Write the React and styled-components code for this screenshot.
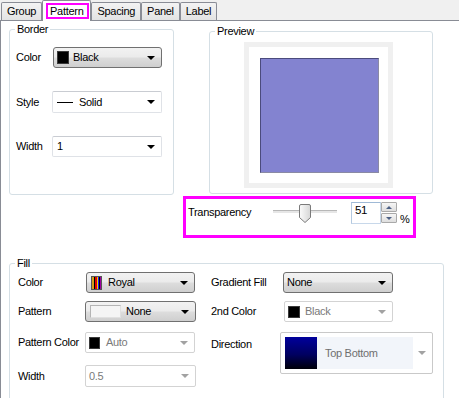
import React from 'react';
import styled, { createGlobalStyle } from 'styled-components';

const GlobalStyle = createGlobalStyle`
  html, body { margin: 0; padding: 0; background: #ffffff; }
  body {
    font-family: "Liberation Sans", Arial, sans-serif;
    font-size: 11px;
    letter-spacing: -0.3px;
    color: #000;
  }
  * { box-sizing: border-box; }
`;

const Window = styled.div`
  width: 459px;
  height: 398px;
  overflow: hidden;
  background: #f0f0f0;
  display: flex;
  flex-direction: column;
`;

const TabStrip = styled.div`
  display: flex;
  align-items: flex-end;
  height: 20px;
  padding-left: 1px;
  flex-shrink: 0;
`;

const Tab = styled.div`
  position: relative;
  z-index: ${p => (p.$active ? 2 : 1)};
  height: ${p => (p.$active ? '21px' : '18px')};
  margin-bottom: ${p => (p.$active ? '-1px' : '0')};
  padding: ${p => (p.$active ? '2px 1px 0 3px' : '0 5px')};
  display: flex;
  align-items: ${p => (p.$active ? 'flex-start' : 'center')};
  border: 1px solid #898c95;
  border-bottom: none;
  border-radius: 2px 2px 0 0;
  background: ${p => (p.$active ? '#ffffff' : 'linear-gradient(#f3f3f3, #e3e3e3)')};
  line-height: 13px;
`;

const Highlight = styled.span`
  border: 2px solid #ff00ff;
  line-height: 12px;
  padding: 0 4px 0 2px;
`;

const Page = styled.div`
  flex: 1;
  background: #ffffff;
  border-top: 1px solid #898c95;
  border-left: 1px solid #898c95;
  padding: 2px 0 0 8px;
`;

const TopRow = styled.div`
  display: flex;
  align-items: flex-start;
`;

const GroupBox = styled.fieldset`
  margin: ${p => p.$margin || '0'};
  min-width: 0;
  width: ${p => p.$w}px;
  height: ${p => p.$h}px;
  border: 1px solid #d5dfe5;
  border-radius: 3px;
  padding: 0;
`;

const GroupBody = styled.div`
  padding: ${p => p.$pad};
`;

const Legend = styled.legend`
  padding: 0 2px;
  margin-left: 5px;
  line-height: 13px;
`;

const FormStack = styled.div`
  display: flex;
  flex-direction: column;
  gap: 23px;
`;

const Row = styled.div`
  display: flex;
  align-items: ${p => (p.$top ? 'flex-start' : 'center')};
  margin-top: ${p => p.$mt || 0}px;
`;

const FieldLabel = styled.div`
  width: ${p => p.$w}px;
  line-height: 13px;
  margin-top: ${p => p.$mt || 0}px;
  flex-shrink: 0;
`;

const Combo = styled.div`
  display: flex;
  align-items: center;
  width: ${p => p.$w}px;
  height: ${p => p.$h || 21}px;
  padding-left: ${p => p.$pl || 3}px;
  line-height: 13px;
  ${p =>
    p.$variant === 'button'
      ? `
    border: 1px solid #707070;
    border-radius: 3px;
    background: linear-gradient(#f2f2f2 0%, #ebebeb 48%, #dddddd 52%, #cfcfcf 100%);
  `
      : p.$variant === 'edit'
      ? `
    border: 1px solid #dfe2e7;
    border-top-color: #c9ccd2;
    border-radius: 2px;
    background: #ffffff;
  `
      : `
    border: 1px solid #d3d3d3;
    border-radius: 2px;
    background: #ffffff;
    color: #7a7a7a;
  `}
`;

const Arrow = styled.span`
  margin-left: auto;
  margin-right: 6px;
  width: 0;
  height: 0;
  border-left: 4px solid transparent;
  border-right: 4px solid transparent;
  border-top: 4px solid ${p => (p.$disabled ? '#a2a2a2' : '#000000')};
`;

const Swatch = styled.span`
  width: ${p => p.$w || 12}px;
  height: ${p => p.$h || 13}px;
  margin-right: ${p => p.$mr || 4}px;
  background: ${p => p.$bg || '#000'};
  border: 1px solid #3a3a3a;
  flex-shrink: 0;
`;

const RoyalSwatch = styled.span`
  width: 11px;
  height: 14px;
  margin: 0 6px 0 1px;
  flex-shrink: 0;
  border: 1px solid #555;
  background: linear-gradient(
    to right,
    #d4a017 0 1.5px,
    #000 1.5px 3px,
    #e00000 3px 4.5px,
    #f2d000 4.5px 6px,
    #1a1aff 6px 7.5px,
    #000 7.5px 8px,
    #a000a0 8px 9px
  );
`;

const PatternPreview = styled.span`
  width: 31px;
  height: 13px;
  margin: 0 5px 0 1px;
  border: 1px solid #b4b4b4;
  border-right-color: #e0e0e0;
  border-bottom-color: #e0e0e0;
  background: #f4f4f4;
  flex-shrink: 0;
`;

const StyleLine = styled.span`
  width: 16px;
  height: 1px;
  background: #000;
  margin-right: 6px;
`;

const SideColumn = styled.div`
  display: flex;
  flex-direction: column;
  margin-left: 9px;
`;

const PreviewFrame = styled.div`
  width: 149px;
  height: 146px;
  border: 5px solid #f0f0f0;
  background: #ffffff;
  padding: 11px 10px 10px 11px;
`;

const PreviewFill = styled.div`
  width: 119px;
  height: 115px;
  background: #8383d0;
  border: 1px solid #8a8aa4;
  border-top-color: #4b4b7d;
  border-left-color: #4b4b7d;
`;

const TransparencyBox = styled.div`
  margin-top: 2px;
  width: 233px;
  height: 42px;
  border: 3px solid #ff00ff;
  display: flex;
  align-items: flex-start;
  padding: 3px 0 0 2px;
`;

const SliderWrap = styled.div`
  margin-top: 2px;
  width: 64px;
  height: 20px;
`;

const Spin = styled.div`
  display: flex;
  margin-left: 14px;
  height: 22px;
`;

const SpinEdit = styled.div`
  width: 30px;
  height: 22px;
  border: 1px solid #c8d8ea;
  border-top-color: #9fb9d6;
  border-left-color: #b4c9e0;
  padding: 1px 0 0 3px;
  line-height: 13px;
  font-size: 11.5px;
`;

const SpinButtons = styled.div`
  display: flex;
  flex-direction: column;
  width: 16px;
  gap: 1px;
`;

const SpinButton = styled.div`
  height: 10px;
  border: 1px solid #a9a9a9;
  border-radius: 1px;
  background: linear-gradient(#f6f6f6, #dedede);
  display: flex;
  align-items: center;
  justify-content: center;
  &::after {
    content: '';
    width: 0;
    height: 0;
    border-left: 3px solid transparent;
    border-right: 3px solid transparent;
    ${p =>
      p.$down
        ? 'border-top: 3px solid #4d6185;'
        : 'border-bottom: 3px solid #4d6185;'}
  }
`;

const Percent = styled.span`
  margin: 11px 0 0 3px;
  line-height: 13px;
`;

const FillColumns = styled.div`
  display: flex;
  align-items: flex-start;
`;

const FillColumn = styled.div`
  display: flex;
  flex-direction: column;
  margin-left: ${p => p.$ml || 0}px;
`;

const DirectionBox = styled.div`
  display: flex;
  align-items: center;
  width: 153px;
  height: 42px;
  border: 1px solid #c9c9c9;
  border-radius: 2px;
  padding: 0 0 0 4px;
`;

const DirectionSwatch = styled.span`
  width: 32px;
  height: 32px;
  flex-shrink: 0;
  background: linear-gradient(#00009c, #000060 55%, #000008);
`;

const DirectionText = styled.span`
  width: 96px;
  height: 32px;
  background: #f2f5fa;
  color: #6f6f6f;
  display: flex;
  align-items: center;
  padding-left: 8px;
  line-height: 13px;
`;

function SliderGraphic() {
  return (
    <svg width="64" height="20" viewBox="0 0 64 20">
      <defs>
        <linearGradient id="thumb" x1="0" y1="0" x2="1" y2="0">
          <stop offset="0" stopColor="#fbfbfb" />
          <stop offset="1" stopColor="#d6d6d6" />
        </linearGradient>
      </defs>
      <rect x="0" y="6" width="64" height="1" fill="#b7b7b7" />
      <rect x="0" y="7" width="64" height="2" fill="#e6e6e6" />
      <path
        d="M26.5 2 Q26.5 0.5 28 0.5 H36 Q37.5 0.5 37.5 2 V13.5 L32 18.5 L26.5 13.5 Z"
        fill="url(#thumb)"
        stroke="#7a7a7a"
      />
    </svg>
  );
}

export default function App() {
  return (
    <>
      <GlobalStyle />
      <Window>
        <TabStrip>
          <Tab>Group</Tab>
          <Tab $active>
            <Highlight>Pattern</Highlight>
          </Tab>
          <Tab>Spacing</Tab>
          <Tab>Panel</Tab>
          <Tab>Label</Tab>
        </TabStrip>
        <Page>
          <TopRow>
            <GroupBox $w={165} $h={172}>
              <Legend>Border</Legend>
              <GroupBody $pad="11px 11px 0 6px">
                <FormStack>
                  <Row>
                    <FieldLabel $w={37}>Color</FieldLabel>
                    <Combo $variant="button" $w={109}>
                      <Swatch />
                      Black
                      <Arrow />
                    </Combo>
                  </Row>
                  <Row>
                    <FieldLabel $w={36}>Style</FieldLabel>
                    <Combo $variant="edit" $w={110} $h={22} $pl={4}>
                      <StyleLine />
                      Solid
                      <Arrow />
                    </Combo>
                  </Row>
                  <Row>
                    <FieldLabel $w={36}>Width</FieldLabel>
                    <Combo $variant="edit" $w={110} $pl={4}>
                      1
                      <Arrow />
                    </Combo>
                  </Row>
                </FormStack>
              </GroupBody>
            </GroupBox>
            <SideColumn>
              <GroupBox $margin="2px 0 0 26px" $w={224} $h={169}>
                <Legend>Preview</Legend>
                <GroupBody $pad="4px 0 0 34px">
                  <PreviewFrame>
                    <PreviewFill />
                  </PreviewFrame>
                </GroupBody>
              </GroupBox>
              <TransparencyBox>
                <FieldLabel $w={85} $mt={4}>Transparency</FieldLabel>
                <SliderWrap>
                  <SliderGraphic />
                </SliderWrap>
                <Spin>
                  <SpinEdit>51</SpinEdit>
                  <SpinButtons>
                    <SpinButton />
                    <SpinButton $down />
                  </SpinButtons>
                </Spin>
                <Percent>%</Percent>
              </TransparencyBox>
            </SideColumn>
          </TopRow>
          <GroupBox $margin="19px 0 0 0" $w={435} $h={150}>
            <Legend>Fill</Legend>
            <GroupBody $pad="2px 0 0 8px">
              <FillColumns>
                <FillColumn>
                  <Row>
                    <FieldLabel $w={68}>Color</FieldLabel>
                    <Combo $variant="button" $w={109}>
                      <RoyalSwatch />
                      Royal
                      <Arrow />
                    </Combo>
                  </Row>
                  <Row $mt={8}>
                    <FieldLabel $w={67}>Pattern</FieldLabel>
                    <Combo $variant="button" $w={111} $pl={3}>
                      <PatternPreview />
                      None
                      <Arrow />
                    </Combo>
                  </Row>
                  <Row $mt={10}>
                    <FieldLabel $w={67}>Pattern Color</FieldLabel>
                    <Combo $w={110}>
                      <Swatch $w={11} $h={12} $mr={6} />
                      Auto
                      <Arrow $disabled />
                    </Combo>
                  </Row>
                  <Row $mt={12}>
                    <FieldLabel $w={67}>Width</FieldLabel>
                    <Combo $w={111} $h={22}>
                      0.5
                      <Arrow $disabled />
                    </Combo>
                  </Row>
                </FillColumn>
                <FillColumn $ml={15}>
                  <Row>
                    <FieldLabel $w={72}>Gradient Fill</FieldLabel>
                    <Combo $variant="button" $w={110}>
                      None
                      <Arrow />
                    </Combo>
                  </Row>
                  <Row $mt={8}>
                    <FieldLabel $w={73}>2nd Color</FieldLabel>
                    <Combo $w={109}>
                      <Swatch $w={12} $h={12} $mr={5} />
                      Black
                      <Arrow $disabled />
                    </Combo>
                  </Row>
                  <Row $mt={10} $top>
                    <FieldLabel $w={69} $mt={6}>Direction</FieldLabel>
                    <DirectionBox>
                      <DirectionSwatch />
                      <DirectionText>Top Bottom</DirectionText>
                      <Arrow $disabled />
                    </DirectionBox>
                  </Row>
                </FillColumn>
              </FillColumns>
            </GroupBody>
          </GroupBox>
        </Page>
      </Window>
    </>
  );
}
